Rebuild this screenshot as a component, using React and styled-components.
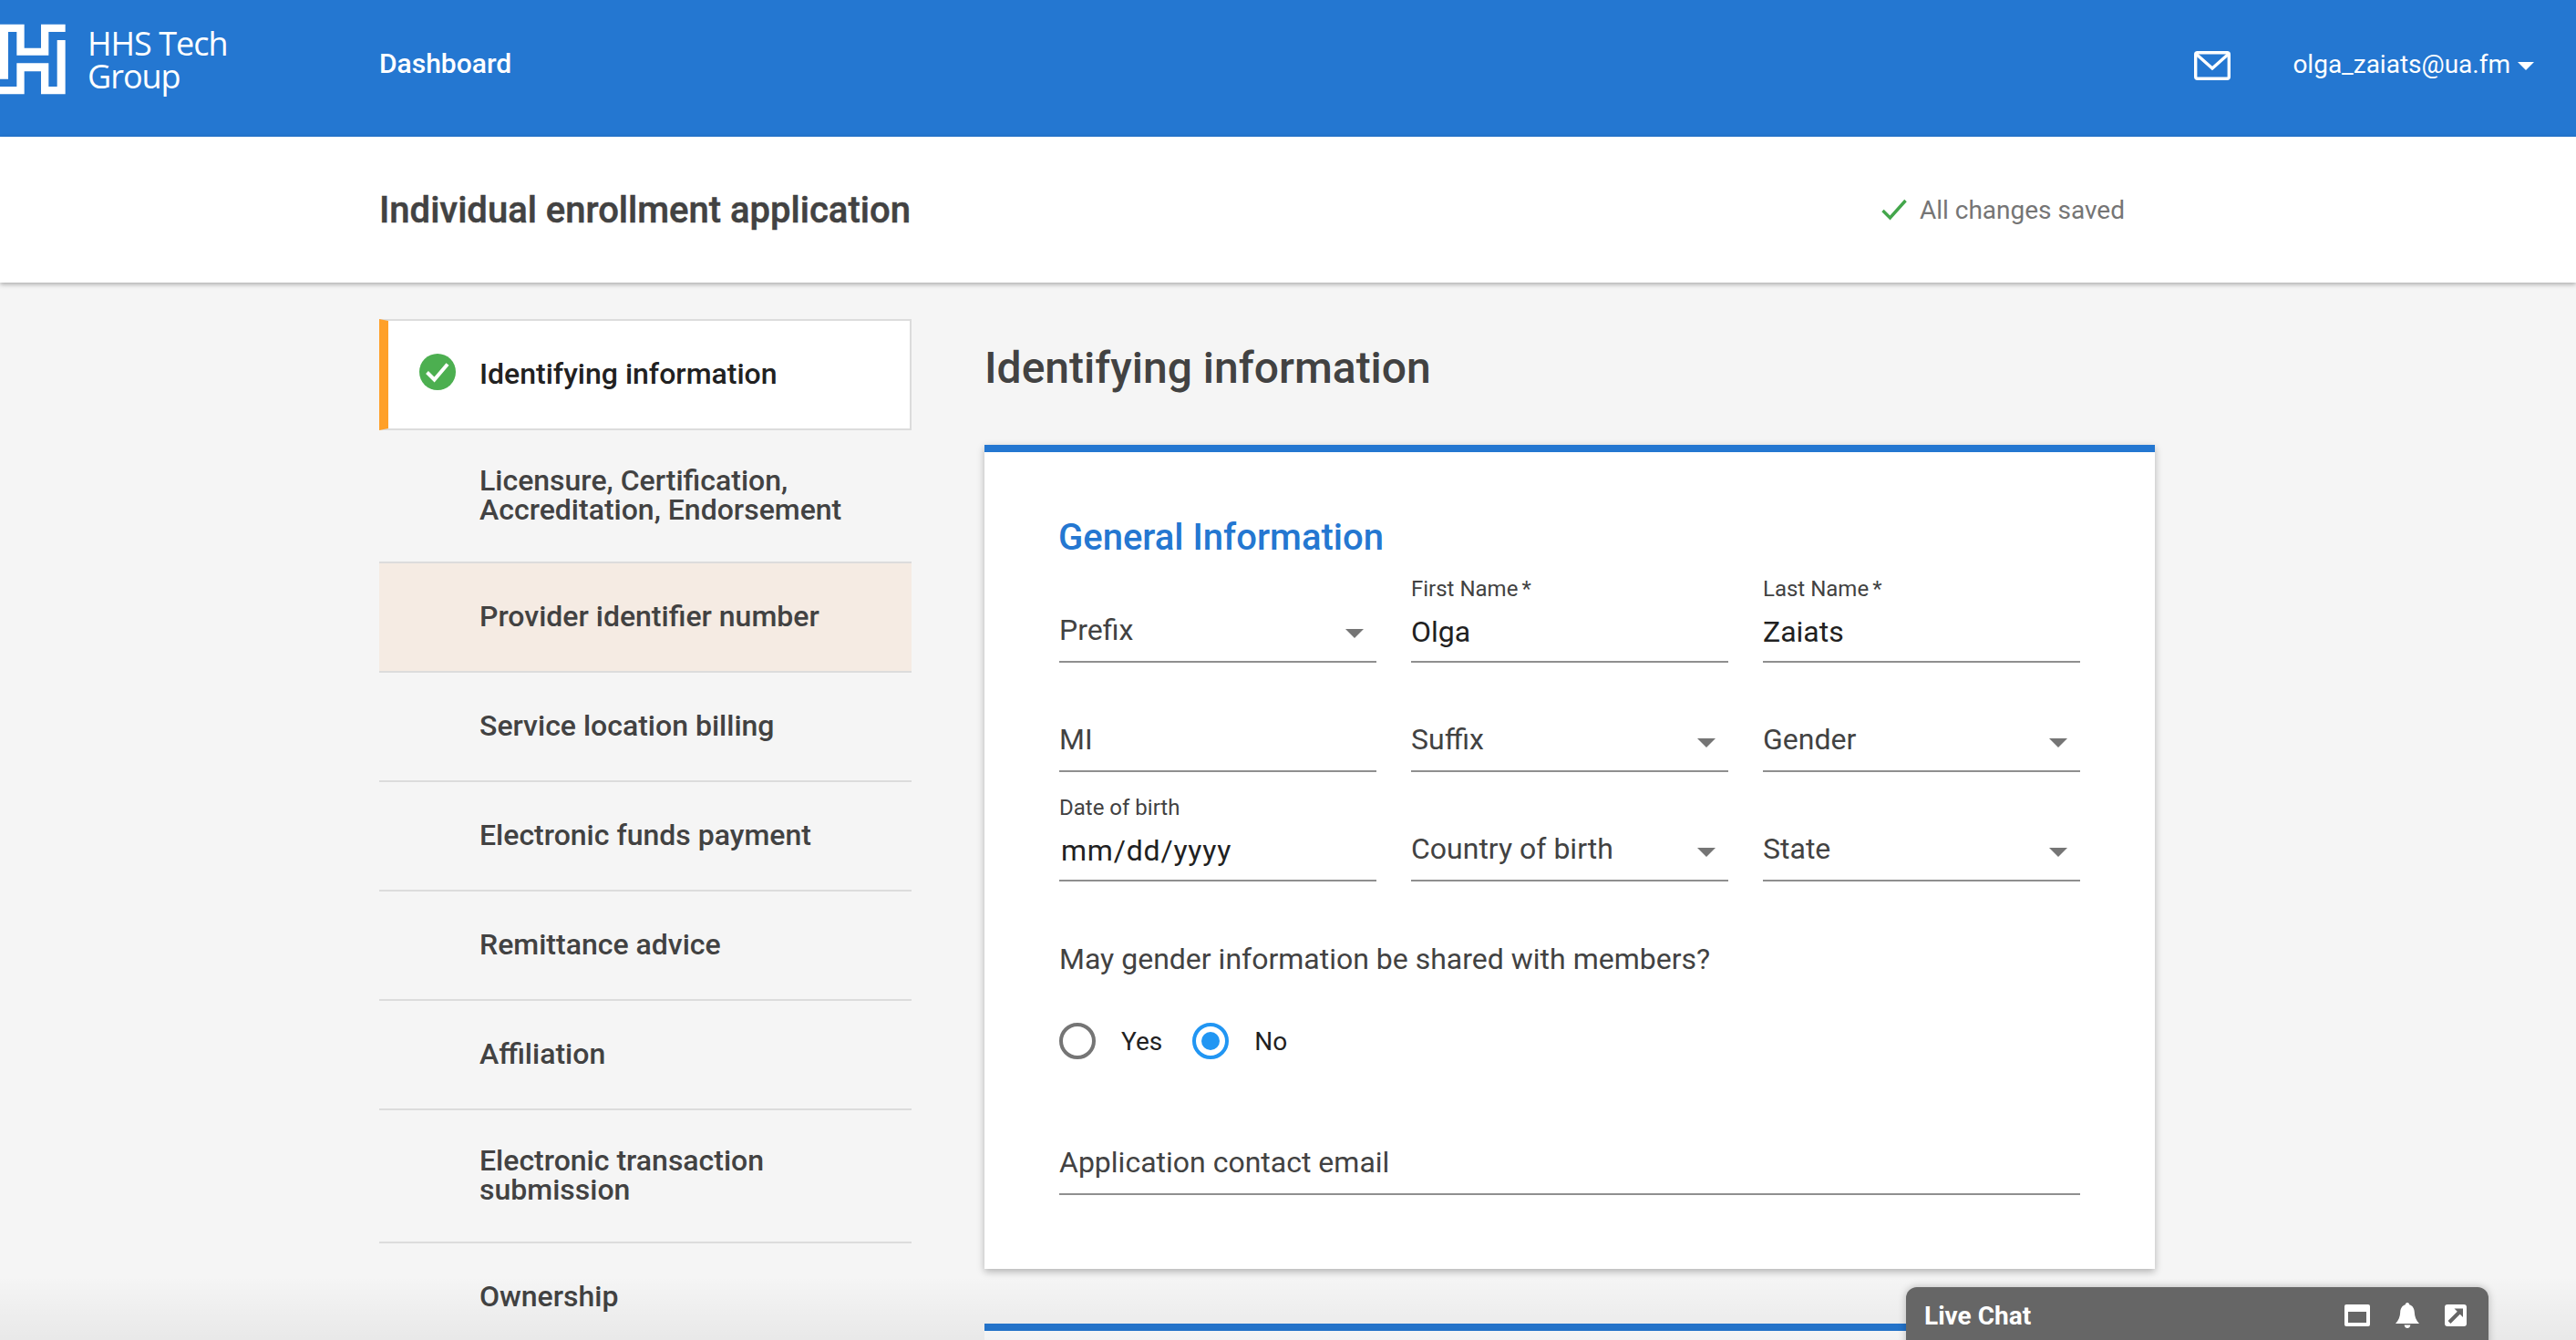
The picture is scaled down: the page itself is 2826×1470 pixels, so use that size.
import React from "react";
import styled, { createGlobalStyle } from "styled-components";

const GlobalStyle = createGlobalStyle`
  html, body {
    margin: 0;
    padding: 0;
    height: 100%;
    overflow: hidden;
    background: #f5f5f5;
    font-family: Roboto, "Liberation Sans", sans-serif;
  }
  * { box-sizing: border-box; }
`;

const navItems = [
  { label: "Identifying information", state: "active" },
  { label: ["Licensure, Certification,", "Accreditation, Endorsement"], tall: true, plain: true },
  { label: "Provider identifier number", state: "hover" },
  { label: "Service location billing" },
  { label: "Electronic funds payment" },
  { label: "Remittance advice" },
  { label: "Affiliation" },
  { label: ["Electronic transaction", "submission"], tall: true },
  { label: "Ownership" },
];

const fields = [
  { placeholder: "Prefix", select: true },
  { label: "First Name", required: true, value: "Olga" },
  { label: "Last Name", required: true, value: "Zaiats" },
  { placeholder: "MI" },
  { placeholder: "Suffix", select: true },
  { placeholder: "Gender", select: true },
  { label: "Date of birth", value: "mm/dd/yyyy", date: true },
  { placeholder: "Country of birth", select: true },
  { placeholder: "State", select: true },
];

const Logo = () => (
  <svg width="80" height="90" viewBox="0 0 240 270" fill="#fff">
    <path d="M0 20H80V98H135V20H215V45H160V122H55V45H27V200H0Z" />
    <path d="M0 225H55V148H160V225H188V72H215V250H135V175H80V250H0Z" />
  </svg>
);

const MailIcon = () => (
  <MailSvg width="40" height="32" viewBox="0 0 40 32" fill="none" stroke="#fff" strokeWidth="3.4">
    <rect x="1.7" y="1.7" width="36.6" height="28.6" rx="2" />
    <path d="M2 3L20 19L38 3" />
  </MailSvg>
);

const SavedCheck = () => (
  <svg width="28" height="24" viewBox="0 0 28 24" fill="none" stroke="#43a64b" strokeWidth="3.4">
    <path d="M1.5 13L9.5 21L26.5 2" />
  </svg>
);

const DoneIcon = () => (
  <svg width="40" height="40" viewBox="0 0 40 40">
    <circle cx="20" cy="20" r="20" fill="#4caf50" />
    <path d="M8.5 20.5L16.5 28.5L31 11.5" fill="none" stroke="#fff" strokeWidth="4" />
  </svg>
);

const WindowIcon = () => (
  <svg width="28" height="24" viewBox="0 0 28 24">
    <path
      fill="#fff"
      fillRule="evenodd"
      d="M2 0H26A2 2 0 0 1 28 2V22A2 2 0 0 1 26 24H2A2 2 0 0 1 0 22V2A2 2 0 0 1 2 0ZM4 8V20H24V8Z"
    />
  </svg>
);

const BellIcon = () => (
  <svg width="26" height="28" viewBox="0 0 26 28" fill="#fff">
    <path d="M13 0C14.4 0 15.2 1 15.2 2.2C19 3.4 20.6 6.6 20.8 10.5C21 15.6 22.6 19.4 26 23H0C3.4 19.4 5 15.6 5.2 10.5C5.4 6.6 7 3.4 10.8 2.2C10.8 1 11.6 0 13 0Z" />
    <path d="M9.6 24.4H16.4C16 26.6 14.6 28 13 28C11.4 28 10 26.6 9.6 24.4Z" />
  </svg>
);

const PopoutIcon = () => (
  <svg width="24" height="24" viewBox="0 0 24 24">
    <rect width="24" height="24" rx="3" fill="#fff" />
    <path d="M5 19.5L16 8.5" stroke="#666" strokeWidth="4" />
    <path d="M10.5 4.5H20V14Z" fill="#666" />
  </svg>
);

const App = () => {
  return (
    <Page>
      <GlobalStyle />
      <Header>
        <Brand>
          <Logo />
          <BrandName>
            HHS Tech
            <br />
            Group
          </BrandName>
        </Brand>
        <NavLink>Dashboard</NavLink>
        <UserArea>
          <MailIcon />
          <UserMenu>
            olga_zaiats@ua.fm
            <UserCaret />
          </UserMenu>
        </UserArea>
      </Header>

      <SubHeader>
        <AppTitle>Individual enrollment application</AppTitle>
        <SaveStatus>
          <SavedCheck />
          All changes saved
        </SaveStatus>
      </SubHeader>

      <Content>
        <Sidebar>
          {navItems.map((item, i) => (
            <NavRow key={i} $state={item.state} $tall={item.tall}>
              {item.state === "active" && (
                <DoneSlot>
                  <DoneIcon />
                </DoneSlot>
              )}
              <NavText $state={item.state}>
                {Array.isArray(item.label)
                  ? item.label.map((line) => <div key={line}>{line}</div>)
                  : item.label}
              </NavText>
            </NavRow>
          ))}
        </Sidebar>

        <Main>
          <PageTitle>Identifying information</PageTitle>
          <Card>
            <SectionTitle>General Information</SectionTitle>
            <FieldGrid>
              {fields.map((f, i) => (
                <Field key={i}>
                  {f.label && (
                    <FieldLabel>
                      {f.label}
                      {f.required && <Required>*</Required>}
                    </FieldLabel>
                  )}
                  <Control>
                    <ControlText $value={!!f.value} $date={f.date}>
                      {f.value || f.placeholder}
                    </ControlText>
                    {f.select && <SelectCaret />}
                  </Control>
                </Field>
              ))}
            </FieldGrid>
            <Question>May gender information be shared with members?</Question>
            <RadioGroup>
              <Radio />
              <RadioLabel>Yes</RadioLabel>
              <Radio $checked />
              <RadioLabel>No</RadioLabel>
            </RadioGroup>
            <EmailField>
              <Control>
                <ControlText>Application contact email</ControlText>
              </Control>
            </EmailField>
          </Card>
          <NextCard />
        </Main>
      </Content>

      <BottomFade />

      <ChatBar>
        <ChatTitle>Live Chat</ChatTitle>
        <ChatIcons>
          <WindowIcon />
          <BellIcon />
          <PopoutIcon />
        </ChatIcons>
      </ChatBar>
    </Page>
  );
};

const Page = styled.div`
  position: relative;
  height: 100vh;
  overflow: hidden;
  background: #f5f5f5;
`;

const Header = styled.header`
  display: flex;
  align-items: center;
  height: 150px;
  padding-right: 46px;
  background: #2477d1;
  color: #fff;
`;
const Brand = styled.div`
  display: flex;
  align-items: center;
  gap: 16px;
  flex: 0 0 416px;
  height: 100%;
  padding-bottom: 20px;
`;
const BrandName = styled.div`
  font-family: "Open Sans", sans-serif;
  font-size: 36px;
  font-weight: 400;
  line-height: 36px;
  margin-top: 2px;
  letter-spacing: -1px;
`;
const NavLink = styled.a`
  font-size: 30px;
  font-weight: 500;
  margin-top: -11px;
`;
const UserArea = styled.div`
  display: flex;
  align-items: center;
  gap: 68px;
  margin-left: auto;
  margin-top: -9px;
`;
const MailSvg = styled.svg`
  margin-top: 3px;
`;
const UserMenu = styled.div`
  display: flex;
  align-items: center;
  gap: 8px;
  font-size: 28px;
`;
const UserCaret = styled.span`
  width: 0;
  height: 0;
  border-left: 9px solid transparent;
  border-right: 9px solid transparent;
  border-top: 9px solid #fff;
  margin-top: 4px;
`;

const SubHeader = styled.div`
  display: flex;
  align-items: center;
  justify-content: space-between;
  height: 160px;
  padding: 0 495px 0 416px;
  background: #fff;
  box-shadow: 0 2px 5px rgba(0, 0, 0, 0.3);
  position: relative;
`;
const AppTitle = styled.h1`
  margin: 0;
  font-size: 40px;
  font-weight: 500;
  color: #424242;
  -webkit-text-stroke: 0.5px #424242;
`;
const SaveStatus = styled.div`
  display: flex;
  align-items: center;
  gap: 14px;
  font-size: 28px;
  color: #757575;
`;

const Content = styled.div`
  display: flex;
  gap: 80px;
  padding: 40px 0 0 416px;
`;

const Sidebar = styled.nav`
  flex: 0 0 584px;
`;
const NavRow = styled.div`
  position: relative;
  display: flex;
  align-items: center;
  height: ${(p) => (p.$tall ? "146px" : "120px")};
  padding-left: 110px;
  border-bottom: 2px solid #dcdcdc;
  ${(p) =>
    p.$state === "active" &&
    `
    height: 122px;
    background: #fff;
    border: 2px solid #dcdcdc;
    border-left: 10px solid #ffa028;
    padding-left: 100px;
  `}
  ${(p) =>
    p.$state === "hover" &&
    `
    background: #f5ebe3;
    border-top: 2px solid #dcdcdc;
    margin-top: -2px;
    height: 122px;
  `}
`;
const DoneSlot = styled.span`
  position: absolute;
  left: 34px;
  top: 36px;
  display: flex;
`;
const NavText = styled.div`
  font-size: 32px;
  font-weight: 500;
  line-height: 32px;
  margin-top: -2px;
  color: ${(p) => (p.$state === "active" ? "#212121" : "#424242")};
`;

const Main = styled.main`
  flex: 0 0 1284px;
`;
const PageTitle = styled.h2`
  height: 138px;
  margin: 0;
  padding-top: 30px;
  font-size: 48px;
  line-height: 48px;
  font-weight: 500;
  color: #424242;
`;
const Card = styled.section`
  padding: 70px 82px 81px;
  background: #fff;
  border-top: 8px solid #2477d1;
  box-shadow: 0 3px 8px rgba(0, 0, 0, 0.28);
`;
const NextCard = styled.section`
  height: 300px;
  margin-top: 60px;
  background: #fff;
  border-top: 8px solid #2477d1;
`;
const SectionTitle = styled.h3`
  margin: 0 0 17px -1px;
  font-size: 40px;
  line-height: 48px;
  font-weight: 500;
  color: #2477d1;
`;
const FieldGrid = styled.div`
  display: grid;
  grid-template-columns: repeat(3, 348px);
  column-gap: 38px;
  row-gap: 24px;
`;
const Field = styled.div`
  display: flex;
  flex-direction: column;
  justify-content: flex-end;
  height: 96px;
`;
const FieldLabel = styled.label`
  font-size: 24px;
  line-height: 30px;
  margin-bottom: 12px;
  color: #424242;
`;
const Required = styled.span`
  margin-left: 4px;
`;
const Control = styled.div`
  display: flex;
  align-items: center;
  justify-content: space-between;
  height: 54px;
  padding-bottom: 12px;
  border-bottom: 2px solid #8f8f8f;
`;
const ControlText = styled.span`
  font-size: 32px;
  line-height: 40px;
  color: ${(p) => (p.$value ? "#212121" : "#424242")};
  margin-top: ${(p) => (p.$value ? "0" : "-4px")};
  ${(p) => p.$date && "padding-left: 2px; letter-spacing: 0.8px;"}
`;
const SelectCaret = styled.span`
  width: 0;
  height: 0;
  margin: 4px 14px 0 0;
  border-left: 10px solid transparent;
  border-right: 10px solid transparent;
  border-top: 10px solid #757575;
`;
const Question = styled.p`
  margin: 65px 0 50px;
  font-size: 32px;
  line-height: 40px;
  color: #424242;
`;
const RadioGroup = styled.div`
  display: flex;
  align-items: center;
`;
const Radio = styled.span`
  display: flex;
  align-items: center;
  justify-content: center;
  width: 40px;
  height: 40px;
  border-radius: 50%;
  border: 4px solid ${(p) => (p.$checked ? "#2196f3" : "#757575")};
  &::after {
    content: "";
    display: ${(p) => (p.$checked ? "block" : "none")};
    width: 20px;
    height: 20px;
    border-radius: 50%;
    background: #2196f3;
  }
`;
const RadioLabel = styled.span`
  margin: 0 33px 0 28px;
  font-size: 28px;
  color: #212121;
`;
const EmailField = styled.div`
  margin-top: 95px;
`;

const BottomFade = styled.div`
  position: absolute;
  left: 0;
  right: 0;
  bottom: 0;
  height: 70px;
  background: linear-gradient(rgba(0, 0, 0, 0), rgba(0, 0, 0, 0.05));
  pointer-events: none;
`;

const ChatBar = styled.div`
  position: absolute;
  left: 2091px;
  top: 1412px;
  display: flex;
  align-items: center;
  justify-content: space-between;
  width: 639px;
  height: 80px;
  padding: 0 24px 18px 20px;
  background: #666;
  border-radius: 12px 12px 0 0;
  box-shadow: 0 0 8px rgba(0, 0, 0, 0.25);
`;
const ChatTitle = styled.div`
  font-size: 28px;
  font-weight: 700;
  color: #fff;
`;
const ChatIcons = styled.div`
  display: flex;
  align-items: center;
  gap: 28px;
`;

export default App;
